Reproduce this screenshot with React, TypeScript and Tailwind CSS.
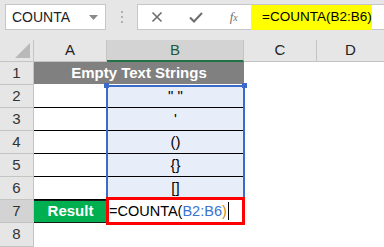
import React from "react";

const font = { fontFamily: '"Liberation Sans", Arial, sans-serif' };

function RowHead({ n, active }: { n: number; active?: boolean }) {
  return (
    <div
      className={`flex items-center justify-center border-r border-b border-[#c4c4c4] text-[15px] text-[#333] ${
        active ? "bg-[#d3d3d3]" : "bg-[#e6e6e6]"
      }`}
    >
      {n}
    </div>
  );
}

export default function App() {
  const data = ['" "', "'", "()", "{}", "[]"];
  return (
    <div className="w-[384px] h-[247px] overflow-hidden bg-white" style={font}>
      {/* toolbar */}
      <div className="h-[40px] bg-[#e6e6e6] flex items-start pt-[4px]">
        <div className="ml-[5px] w-[101px] h-[26px] bg-white border border-[#c6c6c6] flex items-center justify-between pl-[6px] pr-[7px]">
          <span className="text-[14px] text-[#222]">COUNTA</span>
          <svg width="9" height="5" viewBox="0 0 9 5">
            <path d="M0 0 L9 0 L4.5 5 Z" fill="#8a8a8a" />
          </svg>
        </div>
        <div className="w-[31px] h-[26px] flex flex-col items-center justify-center gap-[3px]">
          <span className="w-[2px] h-[2px] bg-[#b0b0b0]" />
          <span className="w-[2px] h-[2px] bg-[#b0b0b0]" />
          <span className="w-[2px] h-[2px] bg-[#b0b0b0]" />
        </div>
        <div className="flex-1 h-[26px] bg-white border border-[#c6c6c6] border-r-0 flex items-center">
          <div className="w-[113px] flex items-center justify-around">
            <svg width="12" height="12" viewBox="0 0 12 12">
              <path d="M1.5 1.5 L10.5 10.5 M10.5 1.5 L1.5 10.5" stroke="#6d6d6d" strokeWidth="1.6" />
            </svg>
            <svg width="14" height="11" viewBox="0 0 14 11">
              <path d="M1 5.5 L5 9.5 L13 1" stroke="#6d6d6d" strokeWidth="2" fill="none" />
            </svg>
            <span
              className="text-[13px] italic text-[#707070]"
              style={{ fontFamily: '"Liberation Serif", serif' }}
            >
              f<span className="text-[10px]">x</span>
            </span>
          </div>
          <div className="h-[25px] w-[121px] bg-[#ffff00] flex items-center pl-[11px] text-[13.5px] text-black whitespace-nowrap">
            =COUNTA(B2:B6)
          </div>
        </div>
      </div>

      {/* grid */}
      <div className="relative">
        <div className="grid grid-cols-[34px_73px_137px_73px_1fr] grid-rows-[22px_23px_23px_23px_23px_23px_23px_23px_24px]">
          {/* header */}
          <div className="relative bg-[#e6e6e6] border-r border-b border-[#c4c4c4]">
            <svg className="absolute right-[3px] bottom-[3px]" width="15" height="15" viewBox="0 0 15 15">
              <path d="M15 0 L15 15 L0 15 Z" fill="#b9b9b9" />
            </svg>
          </div>
          <div className="flex items-center justify-center bg-[#e6e6e6] border-r border-b border-[#c4c4c4] text-[15px] text-[#222]">
            A
          </div>
          <div className="flex items-center justify-center bg-[#d3d3d3] border-r border-[#c4c4c4] border-b-2 border-b-[#217346] text-[15px] text-[#1d5c38]">
            B
          </div>
          <div className="flex items-center justify-center bg-[#e6e6e6] border-r border-b border-[#c4c4c4] text-[15px] text-[#222]">
            C
          </div>
          <div className="flex items-center justify-center bg-[#e6e6e6] border-b border-[#c4c4c4] text-[15px] text-[#222]">
            D
          </div>

          {/* row 1 */}
          <RowHead n={1} />
          <div className="col-span-2 bg-[#808080] flex items-center justify-center text-white font-bold text-[15px] border-b border-white">
            Empty Text Strings
          </div>
          <div />
          <div />

          {/* rows 2-6 */}
          {data.map((d, i) => (
            <React.Fragment key={i}>
              <RowHead n={i + 2} />
              <div className="border-b border-black bg-white" />
              <div
                className={`bg-[#e8eef9] flex items-center justify-center text-[15px] text-black ${
                  i < 4 ? "border-b border-black" : ""
                }`}
              >
                {d}
              </div>
              <div />
              <div />
            </React.Fragment>
          ))}

          {/* row 7 */}
          <RowHead n={7} active />
          <div className="bg-[#00b050] border-t border-b border-[#1a1a1a] flex items-center justify-center text-white font-bold text-[15px]">
            Result
          </div>
          <div className="relative z-10 -mt-[3px] -mb-[2px] -ml-[1px] -mr-[1px] bg-white border-[3px] border-[#ff0000] flex items-center text-[14.5px] text-black leading-none whitespace-nowrap">
            <span>=COUNTA(</span>
            <span className="text-[#3b73d1]">B2:B6</span>
            <span className="text-[#c98a1a]">)</span>
            <span className="ml-[1px] w-[1px] h-[18px] bg-black" />
          </div>
          <div />
          <div />

          {/* row 8 */}
          <RowHead n={8} />
          <div />
          <div />
          <div />
          <div />
        </div>

        {/* range highlight overlay for B2:B6 */}
        <div className="absolute left-[106px] top-[45px] w-[139px] h-[112px] border-x-2 border-t-2 border-[#3a6bc7] pointer-events-none" />
        <div className="absolute left-[104px] top-[43px] w-[5px] h-[5px] bg-[#3a6bc7]" />
        <div className="absolute left-[242px] top-[43px] w-[5px] h-[5px] bg-[#3a6bc7]" />
      </div>
    </div>
  );
}
